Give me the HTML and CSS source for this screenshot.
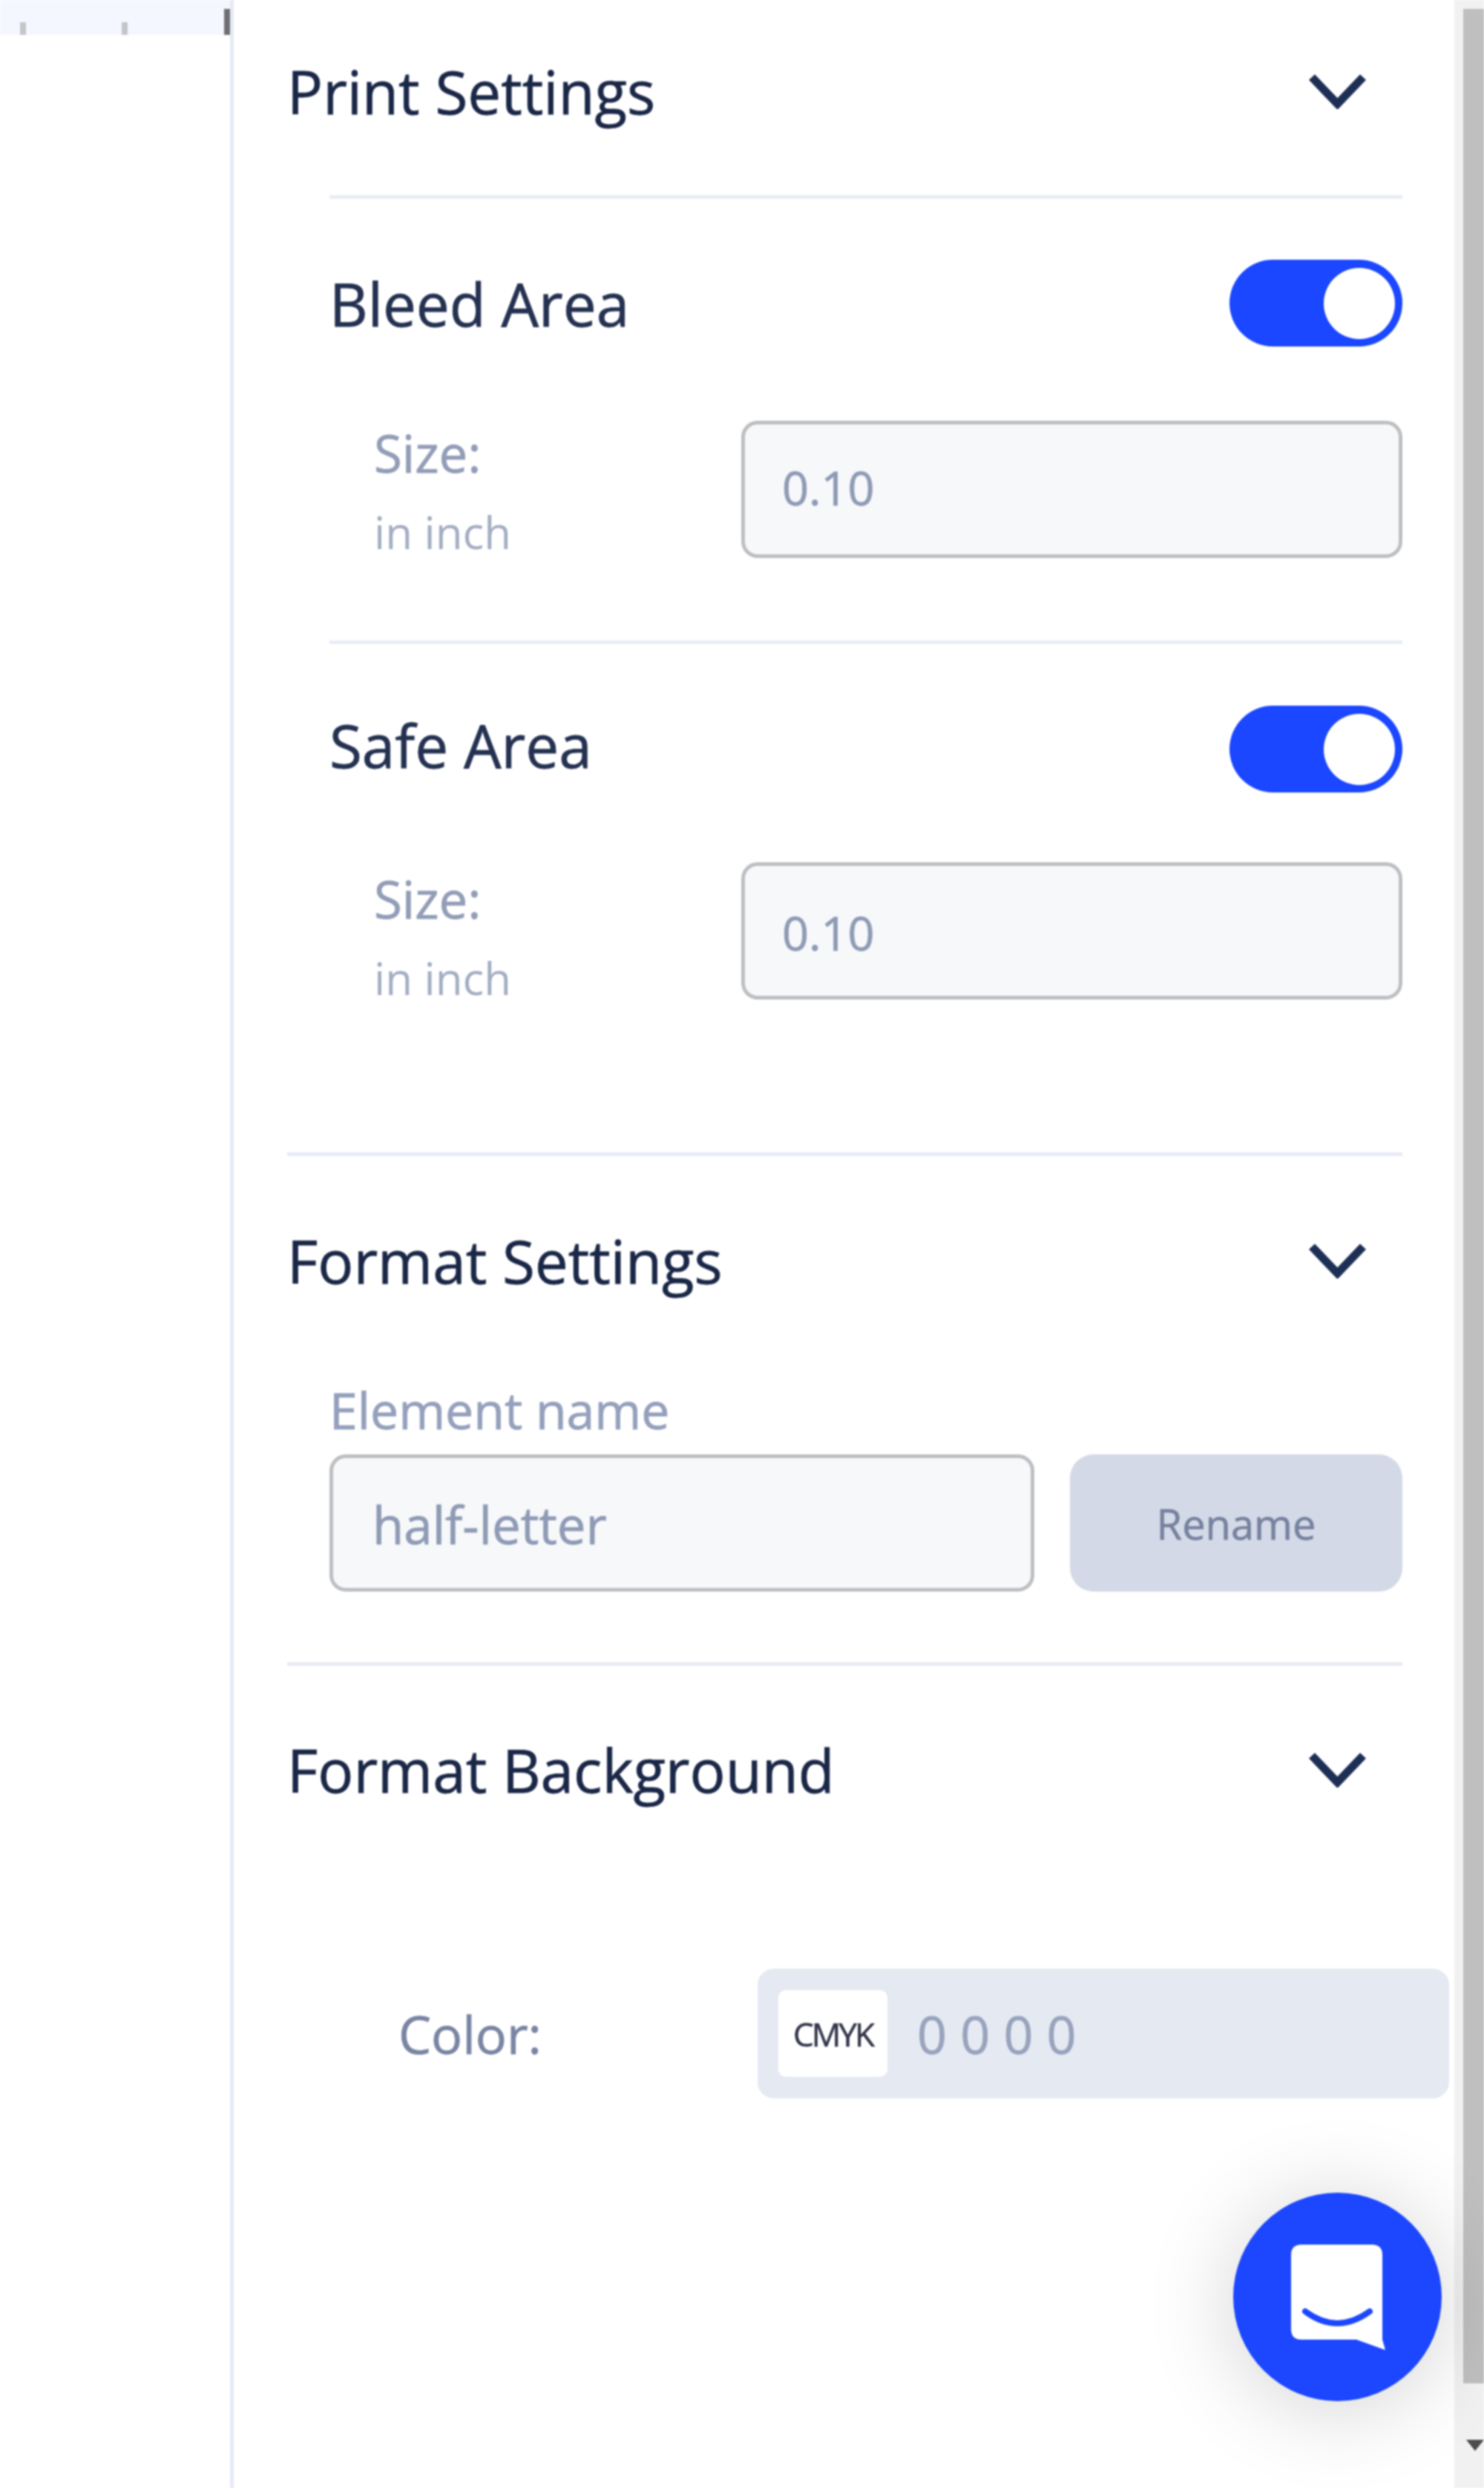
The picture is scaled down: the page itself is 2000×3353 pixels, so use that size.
FILE: index.html
```html
<!DOCTYPE html>
<html lang="en">
<head>
<meta charset="utf-8">
<title>Print settings panel</title>
<link rel="stylesheet" href="styles.css">
</head>
<body>
<div class="app">
  <div class="canvas">
    <div class="ruler">
      <span class="tick"></span>
      <span class="tick"></span>
      <span class="tick tick-major"></span>
    </div>
  </div>
  <aside class="panel">
    <section class="section section-print">
      <header class="section-head">
        <h2 class="section-title">Print Settings</h2>
        <svg class="chevron" viewBox="0 0 77 48"><path d="M4 5 38.500 41 73 5"/></svg>
      </header>
      <div class="sub">
        <div class="sub-head">
          <h3 class="sub-title">Bleed Area</h3>
          <span class="toggle"></span>
        </div>
        <div class="field">
          <div class="field-label"><span class="field-name">Size:</span><span class="field-unit">in inch</span></div>
          <input class="input input-num" type="text" value="0.10" readonly>
        </div>
      </div>
      <div class="sub sub-safe">
        <div class="sub-head">
          <h3 class="sub-title">Safe Area</h3>
          <span class="toggle"></span>
        </div>
        <div class="field">
          <div class="field-label"><span class="field-name">Size:</span><span class="field-unit">in inch</span></div>
          <input class="input input-num" type="text" value="0.10" readonly>
        </div>
      </div>
    </section>
    <section class="section section-format">
      <header class="section-head">
        <h2 class="section-title">Format Settings</h2>
        <svg class="chevron" viewBox="0 0 77 48"><path d="M4 5 38.500 41 73 5"/></svg>
      </header>
      <div class="rename">
        <label class="rename-label">Element name</label>
        <div class="rename-row">
          <input class="input input-text" type="text" value="half-letter" readonly>
          <button class="rename-btn" type="button">Rename</button>
        </div>
      </div>
    </section>
    <section class="section section-background">
      <header class="section-head">
        <h2 class="section-title">Format Background</h2>
        <svg class="chevron" viewBox="0 0 77 48"><path d="M4 5 38.500 41 73 5"/></svg>
      </header>
      <div class="color-row">
        <span class="color-label">Color:</span>
        <div class="color-box">
          <span class="color-mode">CMYK</span>
          <span class="color-value">0 0 0 0</span>
        </div>
      </div>
    </section>
  </aside>
  <div class="scrollbar">
    <div class="scroll-thumb"></div>
    <div class="scroll-arrow"></div>
  </div>
  <button class="chat" type="button" aria-label="Chat">
    <svg class="chat-icon" viewBox="0 0 127 142">
      <path class="chat-bubble" d="M14 0H109Q123 0 123 14V128L127 142 88 128H14Q0 128 0 114V14Q0 0 14 0Z"/>
      <path class="chat-smile" d="M19 90Q62 122 106 90"/>
    </svg>
  </button>
</div>
</body>
</html>
```
FILE: styles.css
```css
* { box-sizing: border-box; }
html, body { margin: 0; height: 100%; background: #fff; }
body { font-family: "Open Sans", "Noto Sans", sans-serif; overflow: hidden; }
.app { display: flex; width: 2000px; height: 3353px; position: relative; filter: blur(1.2px); }

.canvas { width: 310px; flex: none; }
.ruler { height: 47px; background: #f4f7ff; display: flex; align-items: flex-end; padding-left: 27px; }
.tick { width: 8px; height: 17px; background: #c3c5c9; margin-right: 129px; }
.tick-major { height: 35px; background: #6f7075; margin: 0 0 0 1px; }

.panel { flex: 1; border-left: 5px solid #e6eaf6; padding: 0 70px 0 72px; }
.section-head { display: flex; justify-content: space-between; align-items: center; height: 90px; }
.section-title { margin: 0; font-size: 80px; line-height: 90px; font-weight: 500; color: #1a2747; -webkit-text-stroke: .8px currentColor; }
.chevron { width: 77px; height: 48px; margin-right: 49px; fill: none; stroke: #1e2f55; stroke-width: 11; }

.section-print { padding-top: 78px; }
.sub { margin: 0 0 0 57px; border-top: 5px solid #e8edf5; padding-top: 83px; }
.sub:first-of-type { margin-top: 95px; padding-top: 82px; }
.sub:last-child { padding-bottom: 200px; }
.sub-head { display: flex; justify-content: space-between; align-items: center; height: 117px; }
.sub-title { margin: 0; font-size: 80px; line-height: 90px; font-weight: 500; color: #243151; -webkit-text-stroke: .8px currentColor; }
.sub-safe .sub-title { margin-bottom: 12px; }
.toggle { width: 233px; height: 117px; border-radius: 59px; background: #1a47ff; display: flex; justify-content: flex-end; align-items: center; padding-right: 10px; }
.toggle::after { content: ""; width: 96px; height: 96px; border-radius: 50%; background: #fff; }

.field { display: grid; grid-template-columns: 555px 1fr; margin-top: 100px; padding-bottom: 111px; }
.sub-safe .field { margin-top: 94px; padding-bottom: 6px; }
.field-label { display: flex; flex-direction: column; height: 185px; padding-left: 60px; }
.sub-safe .field-label { padding-top: 6px; }
.field-name { font-size: 69px; line-height: 86px; font-weight: 500; color: #929db7; -webkit-text-stroke: .8px currentColor; }
.field-unit { font-size: 60px; line-height: 90px; margin-top: 19px; color: #a3adc3; }

.input { width: 100%; height: 185px; background: #f6f8fa; border: 5px solid #bdbfc2; border-radius: 22px; padding: 0 50px; font: 500 63px "Open Sans", "Noto Sans", sans-serif; color: #8f9bb5; outline: none; -webkit-text-stroke: .8px currentColor; }
.input-num { padding-bottom: 6px; }
.sub-safe .input-num { padding: 3px 50px 0; }
.input-text { font-size: 69px; padding: 3px 50px 0 53px; }

.section-format { border-top: 5px solid #e8ebf5; padding-top: 96px; }
.rename { margin-left: 57px; padding-top: 126px; padding-bottom: 95px; }
.rename-label { display: block; font-size: 68px; line-height: 60px; font-weight: 500; color: #94a0bc; margin-bottom: 30px; -webkit-text-stroke: .8px currentColor; }
.rename-row { display: flex; gap: 48px; }
.rename-row .input { flex: 1; min-width: 0; }
.rename-btn { flex: none; width: 448px; height: 185px; border: none; border-radius: 32px; background: #d3d9e6; font: 500 56px "Open Sans", "Noto Sans", sans-serif; color: #7682a0; padding: 0; -webkit-text-stroke: .6px currentColor; }

.section-background { border-top: 5px solid #e8ebf5; padding-top: 95px; }
.color-row { display: flex; align-items: center; margin: 223px -63px 0 0; padding-left: 150px; }
.color-label { width: 484px; flex: none; font-size: 70px; font-weight: 500; color: #7985a3; -webkit-text-stroke: .8px currentColor; }
.color-box { flex: 1; height: 175px; border-radius: 22px; background: #e5e9f2; display: flex; align-items: center; padding-left: 28px; }
.color-mode { width: 147px; height: 117px; border-radius: 10px; background: #fff; display: flex; align-items: center; justify-content: center; font-size: 44px; font-weight: 500; letter-spacing: -3px; color: #33364a; -webkit-text-stroke: .6px currentColor; }
.color-value { margin-left: 40px; font-size: 70px; font-weight: 500; color: #98a3bd; -webkit-text-stroke: .8px currentColor; }

.scrollbar { width: 40px; flex: none; background: #f1f1f1; padding: 12px 0 0 12px; position: relative; }
.scroll-thumb { height: 3200px; background: #bfbfbf; }
.scroll-arrow { width: 0; height: 0; margin: 76px 0 0 4px; border-left: 12px solid transparent; border-right: 12px solid transparent; border-top: 15px solid #4d4d4d; }

.chat { position: absolute; left: 1662px; top: 2955px; width: 281px; height: 281px; border: none; border-radius: 50%; background: #1c47ff; box-shadow: 0 10px 120px rgba(0, 0, 0, .18); display: flex; align-items: center; justify-content: center; padding: 0 0 0 2px; }
.chat-icon { width: 127px; height: 142px; }
.chat-bubble { fill: #fff; }
.chat-smile { fill: none; stroke: #1c47ff; stroke-width: 8; stroke-linecap: round; }
```
